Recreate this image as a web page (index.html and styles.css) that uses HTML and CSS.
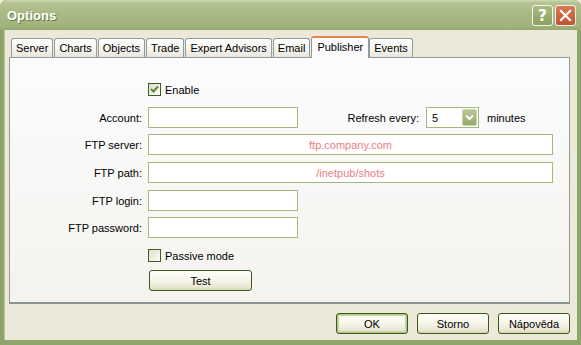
FILE: index.html
```html
<!DOCTYPE html>
<html lang="en">
<head>
  <meta charset="UTF-8" />
  <title>Options</title>
  <link rel="stylesheet" href="styles.css">
</head>
<body>
  <div class="window">
    <div class="titlebar">
      <span class="title">Options</span>
      <div class="title-btns">
        <span class="tbtn help">?</span>
        <span class="tbtn close">
          <svg width="13" height="13" viewBox="0 0 13 13"><path d="M2 2 L11 11 M11 2 L2 11" stroke="#fff" stroke-width="2.2" stroke-linecap="square"/></svg>
        </span>
      </div>
    </div>

    <div class="client">
      <div class="tabs">
        <div class="tab">Server</div>
        <div class="tab">Charts</div>
        <div class="tab">Objects</div>
        <div class="tab">Trade</div>
        <div class="tab">Expert Advisors</div>
        <div class="tab">Email</div>
        <div class="tab active">Publisher</div>
        <div class="tab">Events</div>
      </div>

      <div class="panel">
        <div class="row check-row enable-row">
          <span class="checkbox">
            <svg width="11" height="11" viewBox="0 0 11 11"><path d="M2 5 L4.5 7.5 L9 2.5" fill="none" stroke="#5b8a28" stroke-width="2"/></svg>
          </span>
          <span>Enable</span>
        </div>

        <div class="row account-row">
          <label class="lbl">Account:</label>
          <input class="field short" type="text">
          <span class="lbl refresh">Refresh every:</span>
          <div class="select">
            <span class="select-val">5</span>
            <span class="drop">
              <svg width="9" height="7" viewBox="0 0 9 7"><path d="M1 1.5 L4.5 5 L8 1.5" fill="none" stroke="#fff" stroke-width="2"/></svg>
            </span>
          </div>
          <span class="unit">minutes</span>
        </div>

        <div class="row server-row">
          <label class="lbl">FTP server:</label>
          <input class="field wide" type="text" value="ftp.company.com">
        </div>

        <div class="row path-row">
          <label class="lbl">FTP path:</label>
          <input class="field wide" type="text" value="/inetpub/shots">
        </div>

        <div class="row login-row">
          <label class="lbl">FTP login:</label>
          <input class="field short" type="text">
        </div>

        <div class="row password-row">
          <label class="lbl">FTP password:</label>
          <input class="field short" type="password">
        </div>

        <div class="row check-row passive-row">
          <span class="checkbox"></span>
          <span>Passive mode</span>
        </div>

        <div class="row test-row">
          <button class="btn test">Test</button>
        </div>
      </div>

      <div class="footer">
        <button class="btn default">OK</button>
        <button class="btn">Storno</button>
        <button class="btn">Nápověda</button>
      </div>
    </div>
  </div>
</body>
</html>
```

FILE: styles.css
```css
body {
  margin: 0;
  font-family: 'Liberation Sans', Arial, sans-serif;
  font-size: 11px;
  color: #000;
  background: #ece9d8;
}

.window {
  width: 581px;
  height: 345px;
  display: flex;
  flex-direction: column;
  box-sizing: border-box;
  background: #8fa46b;
  border-radius: 7px 7px 0 0;
  overflow: hidden;
}

/* Title bar */
.titlebar {
  height: 30px;
  flex: none;
  display: flex;
  align-items: center;
  justify-content: space-between;
  padding: 0 5px 0 7px;
  background: linear-gradient(to bottom, #cdd8b0 0, #b4c392 3px, #a9b985 45%, #a2b37c 85%, #95aa71 100%);
}

.title {
  color: #fff;
  font-weight: bold;
  font-size: 13px;
  font-family: 'Liberation Sans', Arial, sans-serif;
  text-shadow: 1px 1px 0 #6a7d48;
}

.title-btns {
  display: flex;
  gap: 2px;
}

.tbtn {
  width: 21px;
  height: 21px;
  box-sizing: border-box;
  border: 1px solid #f4f6ee;
  border-radius: 3px;
  display: flex;
  align-items: center;
  justify-content: center;
  color: #fff;
}

.help {
  background: linear-gradient(to bottom, #a9bb83, #8ba060);
  font-weight: bold;
  font-size: 16px;
  font-family: 'DejaVu Sans', sans-serif;
}

.close {
  background: linear-gradient(to bottom, #d97a55, #c2522f);
}

/* Client area */
.client {
  flex: 1;
  display: flex;
  flex-direction: column;
  background: #ece9d8;
  margin: 0 4px 5px 4px;
  box-shadow: inset 1px 0 0 #b9c79b;
}

.tabs {
  display: flex;
  align-items: flex-end;
  height: 21px;
  padding: 6px 0 0 7px;
  position: relative;
  z-index: 1;
}

.tab {
  height: 19px;
  box-sizing: border-box;
  padding: 0 4px;
  margin-right: 1px;
  border: 1px solid #919b9c;
  border-bottom: none;
  border-radius: 3px 3px 0 0;
  background: linear-gradient(to bottom, #fefefe, #f4f3ee 60%, #e9e7dc);
  display: flex;
  align-items: center;
  white-space: nowrap;
}

.tab.active {
  height: 22px;
  margin: 0 0 -1px 0;
  padding: 0 5px 3px;
  background: #fcfcfe;
  border-top: 2px solid #e2854e;
}

.panel {
  height: 247px;
  box-sizing: border-box;
  margin: 0 7px 0 5px;
  border: 1px solid #919b9c;
  border-bottom-width: 2px;
  border-bottom-color: #8c9496;
  background: linear-gradient(to bottom, #fcfcfe, #f4f3ee);
  padding-top: 25px;
  display: flex;
  flex-direction: column;
}

.row {
  display: flex;
  align-items: center;
}

.lbl {
  width: 132px;
  margin-right: 6px;
  text-align: right;
  white-space: nowrap;
}

.check-row {
  padding-left: 138px;
  height: 13px;
}

.checkbox {
  width: 13px;
  height: 13px;
  box-sizing: border-box;
  border: 1px solid #3e5c22;
  background: linear-gradient(135deg, #dcdcd0, #fdfdfb);
  margin-right: 4px;
  display: flex;
  align-items: center;
  justify-content: center;
}

.account-row { margin-top: 11px; }
.server-row { margin-top: 6px; }
.path-row { margin-top: 7px; }
.login-row { margin-top: 7px; }
.password-row { margin-top: 6px; }
.passive-row { margin-top: 11px; }
.test-row { margin-top: 8px; padding-left: 139px; }

.field {
  height: 21px;
  box-sizing: border-box;
  border: 1px solid #a5b97f;
  background: #fff;
  padding: 0 3px;
  margin: 0;
  font-family: inherit;
  font-size: 11px;
  color: #ee8080;
  outline: none;
}

.field.short { width: 150px; }
.field.wide { width: 405px; text-align: center; }

.lbl.refresh {
  width: 121px;
  margin-right: 7px;
}

.select {
  width: 53px;
  height: 21px;
  box-sizing: border-box;
  border: 1px solid #a5b97f;
  background: #fff;
  display: flex;
  align-items: center;
  justify-content: space-between;
  padding: 1px;
  margin-right: 8px;
}

.select-val { padding-left: 4px; }

.drop {
  width: 15px;
  height: 17px;
  border-radius: 2px;
  background: linear-gradient(to bottom, #b6c692, #97ab6b);
  border: 1px solid #c9d4ad;
  box-sizing: border-box;
  display: flex;
  align-items: center;
  justify-content: center;
}

/* Buttons */
.btn {
  height: 21px;
  box-sizing: border-box;
  border: 1px solid #3b5a1c;
  border-radius: 3px;
  background: linear-gradient(to bottom, #fffff9, #f6f5ea 50%, #e9e6d2 85%, #d8d3b6);
  font-family: inherit;
  font-size: 11px;
  color: #000;
  padding: 0;
  cursor: pointer;
}

.btn.test { width: 103px; }

.btn.default {
  box-shadow: inset 0 0 0 1px #b2c58c, inset 0 0 0 2px #c9d7a6;
}

.footer {
  display: flex;
  justify-content: flex-end;
  gap: 9px;
  margin-top: 9px;
  padding-right: 7px;
}

.footer .btn { width: 72px; }
```
